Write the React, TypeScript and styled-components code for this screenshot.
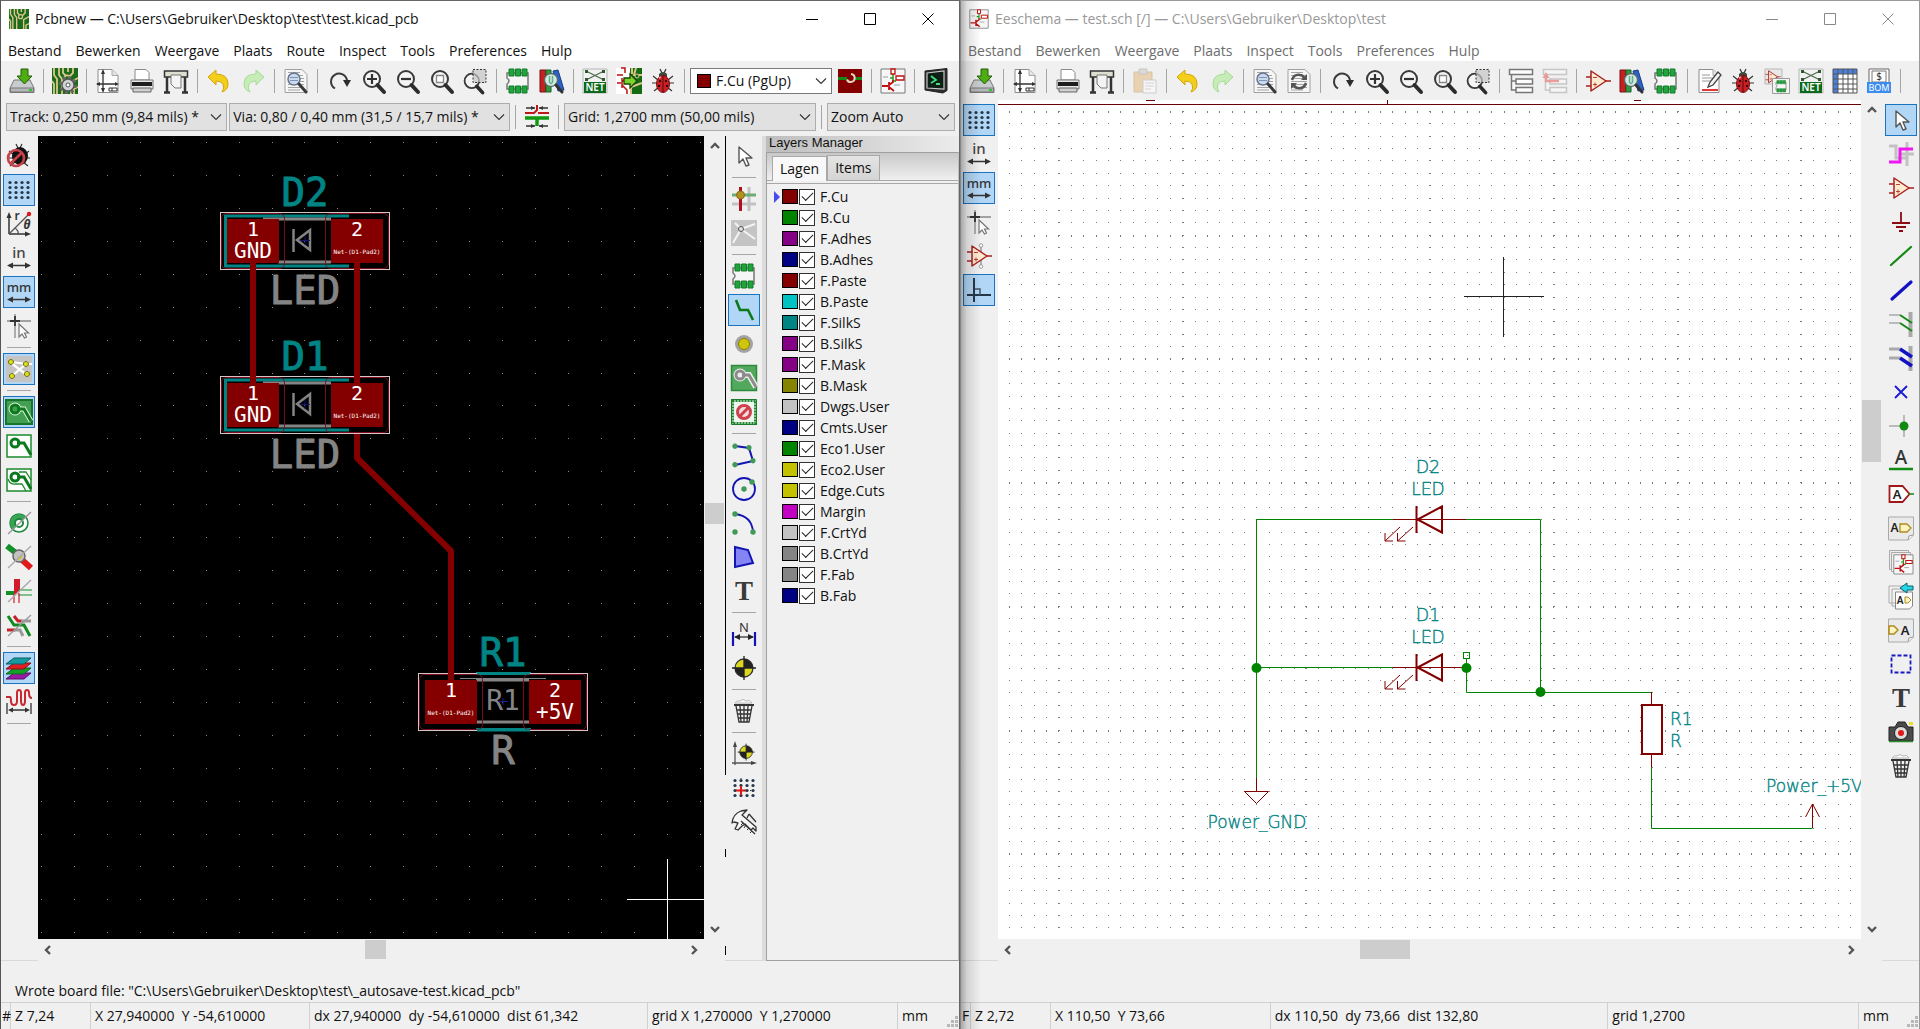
import React from "react";
import styled, { createGlobalStyle, css } from "styled-components";

/* ---------- theme values ---------- */

const UI_FONT = `"Open Sans", "Noto Sans", sans-serif`;
const CHROME = "#f0f0f0";
const BOARD_RED = "#840000";
const SILK = "#008484";
const FAB = "#848484";
const WIRE = "#008400";

const GlobalStyle = createGlobalStyle`
  * { box-sizing: border-box; }
  html, body { margin: 0; padding: 0; background: ${CHROME}; }
  body { font-family: ${UI_FONT}; font-size: 14px; line-height: 20px; color: #111; overflow: hidden; }
  button, select, input { font: inherit; color: inherit; margin: 0; }
`;

/* ---------- window frame ---------- */

const Desktop = styled.main`
  display: grid;
  grid-template-columns: 1fr 1fr;
  height: 100vh;
`;

const Window = styled.section<{ $inactive?: boolean }>`
  position: relative;
  display: flex;
  flex-direction: column;
  min-width: 0;
  min-height: 0;
  background: ${CHROME};
  border-top: 1px solid ${(p) => (p.$inactive ? "#999" : "#666")};
  border-left: 1px solid ${(p) => (p.$inactive ? "#858585" : "#555")};
  border-right: 1px solid ${(p) => (p.$inactive ? "#999" : "#666")};
  ${(p) =>
    p.$inactive &&
    css`
      &::before {
        content: "";
        position: absolute;
        z-index: 2;
        inset: 0 auto 0 0;
        width: 20px;
        pointer-events: none;
        background: linear-gradient(90deg, rgba(0, 0, 0, 0.3), rgba(0, 0, 0, 0.12) 30%, rgba(0, 0, 0, 0));
      }
    `}
`;

const TitleBar = styled.header<{ $inactive?: boolean }>`
  display: flex;
  align-items: center;
  height: 36px;
  padding: 0 2px 0 8px;
  gap: 6px;
  background: #fff;
  color: ${(p) => (p.$inactive ? "#999" : "#111")};
`;

const Title = styled.h1`
  flex: 1;
  margin: 0;
  font-size: 14px;
  font-weight: 400;
  line-height: 20px;
  white-space: nowrap;
`;

const Caption = styled.button`
  display: grid;
  place-items: center;
  width: 58px;
  height: 36px;
  padding: 0;
  border: 0;
  background: none;
`;

const CaptionGroup = styled.div`
  display: flex;
  margin-left: -6px;
`;

const MenuBar = styled.nav<{ $inactive?: boolean }>`
  display: flex;
  align-items: flex-end;
  height: 24px;
  background: #fff;
  color: ${(p) => (p.$inactive ? "#6d6d6d" : "#111")};
`;

const MenuItem = styled.button`
  padding: 0 7px;
  height: 21px;
  line-height: 20px;
  border: 0;
  background: none;
`;

const ToolRow = styled.div<{ $height: number }>`
  display: flex;
  align-items: center;
  gap: 2px;
  height: ${(p) => p.$height}px;
  padding: 0 5px;
`;

const SelectRow = styled(ToolRow)`
  padding-right: 4px;
`;

const Workspace = styled.div<{ $gap?: number }>`
  display: flex;
  flex: 1;
  min-height: 0;
  margin-top: ${(p) => p.$gap ?? 0}px;
`;

const SideBar = styled.div<{ $side: "left" | "right" | "inner" }>`
  display: flex;
  flex-direction: column;
  align-items: center;
  gap: 2px;
  flex: none;
  width: 37px;
  padding: 4px ${(p) => (p.$side === "left" ? 3 : 2)}px 0 ${(p) => (p.$side === "left" ? 2 : 3)}px;
  border-bottom: 1px solid #d9d9d9;
  ${(p) =>
    p.$side === "inner" &&
    css`
      background: linear-gradient(
          #000 0 639px,
          transparent 639px 713px,
          #000 713px 721px,
          transparent 721px 810px,
          #000 810px 819px,
          transparent 819px
        )
        0 0 / 1px 100% no-repeat;
    `}
`;

const ToolBtn = styled.button<{ $on?: boolean; $off?: boolean }>`
  display: grid;
  place-items: center;
  flex: none;
  width: 32px;
  height: 32px;
  padding: 0;
  border: 1px solid ${(p) => (p.$on ? "#1a74c0" : "transparent")};
  background: ${(p) => (p.$on ? "#b2d6f5" : "transparent")};
  opacity: ${(p) => (p.$off ? 0.4 : 1)};
`;

const IconSvg = styled.svg`
  display: block;
  flex: none;
  overflow: visible;
`;

const VSep = styled.span`
  width: 1px;
  height: 24px;
  margin: 0 3px;
  background: #a6a6a6;
`;

const HSep = styled.span`
  width: 24px;
  height: 1px;
  margin: 3px 0;
  background: #a6a6a6;
`;

/* ---------- drop-downs ---------- */

const SelectWrap = styled.div<{ $grow: number; $white?: boolean }>`
  display: grid;
  grid-template-columns: auto 1fr auto;
  align-items: center;
  flex: ${(p) => (p.$white ? "0 0 142px" : `${p.$grow} 1 0`)};
  min-width: 0;
  height: ${(p) => (p.$white ? 26 : 28)}px;
  border: 1px solid ${(p) => (p.$white ? "#7a7a7a" : "#adadad")};
  background: ${(p) => (p.$white ? "#fff" : "#e1e1e1")};
  & > select {
    grid-area: 1 / 1 / 2 / 4;
    width: 100%;
    height: 100%;
    padding: 0 20px 0 ${(p) => (p.$white ? 25 : 3)}px;
    border: 0;
    background: transparent;
    appearance: none;
  }
  & > svg {
    grid-area: 1 / 3;
    margin-right: 4px;
    pointer-events: none;
  }
`;

const SelectChip = styled.span`
  grid-area: 1 / 1;
  width: 14px;
  height: 14px;
  margin-left: 6px;
  border: 1px solid #000;
  background: ${BOARD_RED};
`;

/* ---------- canvas and scroll bars ---------- */

const CanvasArea = styled.div`
  display: grid;
  flex: 1;
  min-width: 0;
  grid-template-columns: minmax(0, 1fr) 21px;
  grid-template-rows: minmax(0, 1fr) 22px;
`;

const Drawing = styled.svg<{ $bg: string }>`
  display: block;
  width: 100%;
  height: 100%;
  overflow: hidden;
  background: ${(p) => p.$bg};
`;

const ScrollBar = styled.div<{ $dir: "v" | "h"; $tracks: string }>`
  display: grid;
  padding: ${(p) => (p.$dir === "v" ? "0 1px" : "1px 0 2px")};
  ${(p) => (p.$dir === "v" ? `grid-template-rows: ${p.$tracks};` : `grid-template-columns: ${p.$tracks};`)}
`;

const ScrollArrow = styled.button`
  display: grid;
  place-items: center;
  padding: 0;
  border: 0;
  background: none;
`;

const Thumb = styled.span`
  background: #cdcdcd;
`;

/* ---------- layers panel ---------- */

const Layers = styled.aside`
  display: flex;
  flex-direction: column;
  flex: none;
  width: 197px;
  border-left: 4px solid #dcdcdc;
`;

const LayersCaption = styled.div`
  height: 16px;
  padding-left: 3px;
  font-family: "Liberation Sans", Arial, sans-serif;
  font-size: 13px;
  line-height: 14px;
  background: linear-gradient(90deg, #bdbdbd, #ececec);
`;

const LayersBody = styled.div`
  display: flex;
  flex-direction: column;
  flex: 1;
  border: 1px solid #a0a0a0;
  border-right-color: #c0c0c0;
`;

const TabStrip = styled.div`
  display: flex;
  align-items: flex-end;
  height: 28px;
  padding-left: 5px;
  background: linear-gradient(#c8c8c8, ${CHROME});
  border-bottom: 1px solid #a8a8a8;
`;

const Tab = styled.button<{ $on?: boolean }>`
  height: 25px;
  padding: 0 7px;
  margin-bottom: ${(p) => (p.$on ? -1 : 0)}px;
  border: 1px solid #a8a8a8;
  border-bottom: 0;
  background: ${(p) => (p.$on ? "#f8f8f8" : "linear-gradient(#e4e4e4, #d4d4d4)")};
`;

const LayerList = styled.ul`
  margin: 2px 0 0;
  padding: 2px 0 0;
  border-top: 1px solid #a8a8a8;
  list-style: none;
`;

const LayerRow = styled.li`
  display: grid;
  grid-template-columns: 8px 16px 1fr;
  align-items: center;
  height: 21px;
  padding-left: 7px;
`;

const ActiveMark = styled.span<{ $on: boolean }>`
  width: 0;
  height: 0;
  border-left: 6px solid ${(p) => (p.$on ? "#4a4af0" : "transparent")};
  border-top: 6px solid transparent;
  border-bottom: 6px solid transparent;
`;

const Swatch = styled.button<{ $color: string }>`
  width: 16px;
  height: 15px;
  padding: 0;
  border: 1px solid #000;
  background: ${(p) => p.$color};
`;

const LayerLabel = styled.label`
  display: flex;
  align-items: center;
  gap: 5px;
  margin-left: 1px;
`;

const Check = styled.input`
  display: grid;
  place-items: center;
  width: 16px;
  height: 16px;
  border: 1px solid #333;
  background: #fff;
  appearance: none;
  &:checked::after {
    content: "";
    width: 10px;
    height: 5px;
    margin-bottom: 3px;
    border-left: 1px solid #222;
    border-bottom: 1px solid #222;
    transform: rotate(-45deg);
  }
`;

/* ---------- message and status bars ---------- */

const Message = styled.div`
  display: flex;
  align-items: center;
  flex: none;
  height: 41px;
  padding: 19px 14px 0;
`;

const Status = styled.footer<{ $columns: string }>`
  display: grid;
  grid-template-columns: ${(p) => p.$columns};
  flex: none;
  height: 27px;
  border-top: 1px solid #d0d0d0;
`;

const Cell = styled.div`
  display: flex;
  align-items: center;
  overflow: hidden;
  padding-left: 4px;
  border-right: 1px solid #d0d0d0;
  white-space: pre;
  &:first-child {
    overflow: visible;
    padding-left: 1px;
  }
  &:last-child {
    justify-content: space-between;
    border-right: 0;
  }
`;

/* ---------- icons ---------- */

const sans = `"Noto Sans", sans-serif`;

const lens = (
  <>
    <circle cx="12" cy="11" r="8" fill="#f4f4f4" stroke="#3a3a3a" strokeWidth="2" />
    <path d="M17.500 17l6.500 7" stroke="#2c2c2c" strokeWidth="4" strokeLinecap="round" />
  </>
);

const sheetBase = (
  <>
    <path d="M3 1.500h14l6 6v17H3z" fill="#fdfdfd" stroke="#8c8c8c" />
    <path d="M17 1.500v6h6" fill="#e4e4e4" stroke="#a8a8a8" />
  </>
);

const textSheet = (
  <>
    <path d="M2 1.500h17l5 5v18H2z" fill="#f6f6f6" stroke="#a0a0a0" />
    <path d="M5 4.500h12M5 7.500h15M5 10.500h16M5 13.500h16M5 16.500h16M5 19.500h16M5 22h12" stroke="#a4a4a4" />
  </>
);

const chip = (
  <>
    <path d="M2 5h21v16H2v-5q4-3 0-6z" fill="#f6f6f6" stroke="#777" strokeWidth="1.500" />
    <path
      d="M4 1h5v7H4zM10.500 1h5v7h-5zM17 1h5v7h-5zM4 18h5v7H4zM10.500 18h5v7h-5zM17 18h5v7h-5z"
      fill="#1fa53c"
      stroke="#157a2b"
    />
  </>
);

const opamp = (
  <>
    <path d="M1 9h5M1 18h5M20 13h6" stroke="#a82020" strokeWidth="1.300" />
    <path d="M6 3v20l15-10z" fill="#fdebd0" stroke="#a82020" strokeWidth="1.500" strokeLinejoin="round" />
    <path d="M8 9.500h4M8 16.500h4M10 14.500v4" stroke="#b84040" />
  </>
);

const schematic = (
  <>
    <path d="M1 1h24v24H1z" fill="#f7f7f7" stroke="#777" />
    <path d="M13 3v10h3M13 10h-3" stroke="#1c9a1c" strokeWidth="1.500" fill="none" />
    <path d="M11 1h4v5h-4zM16 8h8v4h-8z" fill="#fff" stroke="#c01010" strokeWidth="1.300" />
    <path d="M2 18h6M9 14v8M9 17l4-3v-2M9 19l5 4" stroke="#c01010" strokeWidth="1.800" fill="none" />
    <path d="M3 9h5M14 17h6" stroke="#99a" />
  </>
);

const board = (
  <>
    <path d="M0 0h26v26H0z" fill="#1d6b1d" />
    <path
      d="M2 0v7l3 4v15M7 0v7l3 4v15M11 0v5l3 3M16 0v4M21 0v5l-4 4M26 10l-7 4v12M0 13l2 3v10M26 19l-4 2v5"
      fill="none"
      stroke="#dcc88c"
      strokeWidth="1.800"
    />
    <circle cx="15" cy="10" r="2.600" fill="#1d6b1d" stroke="#dcc88c" strokeWidth="1.600" />
  </>
);

const bugLegs = <path d="M3 8l5 4M2 15h6M4 23l5-4M23 8l-5 4M24 15h-6M22 23l-5-4M10 1l2 4M16 1l-2 4" stroke="#333" strokeWidth="1.200" />;

const bug = (
  <>
    {bugLegs}
    <path d="M9 6q4-4 8 0v3H9z" fill="#3b4a3b" />
    <ellipse cx="13" cy="16" rx="6.500" ry="8.500" fill="#c81e24" stroke="#7a1014" />
    <path d="M13 8v16" stroke="#5a0a0e" />
    <path d="M9 12h2v2H9zM15 12h2v2h-2zM8 17h2v2H8zM16 17h2v2h-2z" fill="#300" />
    <path d="M9 10l2-1" stroke="#f4a0a0" strokeWidth="1.500" />
  </>
);

const net = (
  <>
    <path d="M1 1h24v24H1z" fill="#f2f2f2" stroke="#b5b5b5" />
    <path d="M4 3l18 9M4 12l18-9" stroke="#4b6b4b" strokeWidth="1.300" />
    <path d="M3 2h3v3H3zM20 2h3v3h-3zM3 10h3v3H3zM20 10h3v3h-3z" fill="#2c5a2c" />
    <path d="M2 14h22v11H2z" fill="#0c6a1c" />
    <text x="13" y="23" textAnchor="middle" fontFamily={sans} fontSize="10" fontWeight="600" fill="#fff">
      NET
    </text>
  </>
);

const trash = (
  <>
    <path d="M4 5q2-3 5-2 3-3 6 0 4-2 6 2z" fill="#fff" stroke="#b4b4b4" />
    <path d="M3 7h20" stroke="#333" strokeWidth="2" />
    <path d="M5 8l3 16h10l3-16M9 8l1 16M13 8v16M17 8l-1 16M6 12h14M7 16h12M7 20h12" fill="none" stroke="#333" strokeWidth="1.300" />
  </>
);

const target = (
  <>
    <circle cx="13" cy="13" r="9" fill="#dcd820" stroke="#333" strokeWidth="1.300" />
    <path d="M13 13V4a9 9 0 0 1 9 9zM13 13v9a9 9 0 0 1-9-9z" fill="#222" />
    <path d="M13 1v24M1 13h24" stroke="#222" strokeWidth="1.300" />
  </>
);

const dots = [5, 10, 15, 20].map((y) =>
  [4, 10, 16, 22].map((x) => <circle key={`${x}-${y}`} cx={x} cy={y + 0.5} r="1.600" fill="#24384a" />),
);

const doubleArrow = (
  <>
    <path d="M3 20.500h20" stroke="#333" strokeWidth="1.500" />
    <path d="M1 20.500l6-3v6zM25 20.500l-6-3v6z" fill="#333" />
  </>
);

const pointer = <path d="M8 4v16l4-4 3 7 3-1-3-7h6z" fill="#fff" stroke="#555" strokeWidth="1.400" strokeLinejoin="round" />;

const zoneTrack = (color: string) => (
  <>
    <path d="M11 10h7l7 12" fill="none" stroke={color} strokeWidth="3" />
    <circle cx="9" cy="10" r="4" fill="none" stroke={color} strokeWidth="3" />
  </>
);

const bigT = (
  <text x="13" y="22" textAnchor="middle" fontFamily={`"Liberation Serif", serif`} fontSize="27" fontWeight="700" fill="#3a3a3a">
    T
  </text>
);

const icons = {
  save: (
    <>
      <path d="M5 12h16l4 8v4.500H1V20z" fill="#c9cccf" stroke="#777" />
      <path d="M1.500 20h23v4h-23z" fill="#b4b8bb" stroke="#777" />
      <path d="M20 22h3" stroke="#2bc42b" strokeWidth="2" />
      <path d="M12 1h7v7h4l-7.500 8L8 8h4z" fill="#4cae12" stroke="#245c06" />
    </>
  ),
  boardSetup: (
    <>
      {board}
      <circle cx="16" cy="17" r="7.500" fill="none" stroke="#666" strokeWidth="3" strokeDasharray="3 2.900" />
      <circle cx="16" cy="17" r="6" fill="#cfd3d6" stroke="#555" strokeWidth="1.300" />
      <circle cx="16" cy="17" r="2" fill="#fff" stroke="#555" />
    </>
  ),
  board,
  page: (
    <>
      {sheetBase}
      <path d="M2 16h19M8 3v20" stroke="#333" strokeWidth="1.300" />
      <path d="M8 1l-2 5h4zM8 25l-2-5h4zM1 16l4-2v4zM24 16l-4-2v4z" fill="#333" />
      <path d="M14 20h8v3h-8zM17 20v3" fill="#fff" stroke="#333" />
    </>
  ),
  print: (
    <>
      <path d="M6 1.500h11l3 3V12H6z" fill="#fff" stroke="#8a8a8a" />
      <path d="M2 12h22v9H2z" fill="#e6e6e6" stroke="#777" />
      <path d="M3 14h20v4H3z" fill="#1d1d1d" />
      <path d="M4 20h18v4H4z" fill="#cfcfcf" stroke="#666" />
    </>
  ),
  plot: (
    <>
      <path d="M1.500 3h23v6h-23z" fill="#dcdfd0" stroke="#333" strokeWidth="1.500" />
      <path d="M4 9v15M22 9v15M1 24.500h6M19 24.500h6" stroke="#333" strokeWidth="2.500" />
      <path d="M8 7h10v13h-6l-4-4z" fill="#f4f4f4" stroke="#777" />
    </>
  ),
  undo: <path d="M2 9l8-7v4q12 0 12 10 0 6-6 8 3-4 1-8-2-3-7-3v4z" fill="#f3cf1a" stroke="#d2a510" />,
  redo: <path d="M24 9l-8-7v4Q4 6 4 16q0 6 6 8-3-4-1-8 2-3 7-3v4z" fill="#c6edb8" stroke="#a6dc96" />,
  find: (
    <>
      {textSheet}
      <circle cx="11" cy="11" r="6" fill="#cddaee" stroke="#66758f" strokeWidth="1.500" />
      <path d="M7 9.500h8M7 12.500h8" stroke="#7d92b8" />
      <path d="M16 16l7 8" stroke="#3a3a3a" strokeWidth="3" strokeLinecap="round" />
    </>
  ),
  replace: (
    <>
      {textSheet}
      <path d="M6 12q2-6 8-5 3 0 4 3M20 15q-2 6-8 5-3 0-4-3" fill="none" stroke="#555" strokeWidth="2.500" />
      <path d="M21 6v6h-6zM5 21v-6h6z" fill="#555" />
    </>
  ),
  refresh: (
    <>
      <path d="M9 20.500A8 8 0 1 1 21 13" fill="none" stroke="#3a3a3a" strokeWidth="2" />
      <path d="M17 12h8l-4 7z" fill="#2c2c2c" />
    </>
  ),
  zoomIn: (
    <>
      {lens}
      <path d="M7 11h10M12 6v10" stroke="#333" strokeWidth="2.200" />
    </>
  ),
  zoomOut: (
    <>
      {lens}
      <path d="M7 11h10" stroke="#333" strokeWidth="2.200" />
    </>
  ),
  zoomFit: (
    <>
      {lens}
      <path d="M8.500 7.500h7v7h-7z" fill="#fff" stroke="#888" strokeWidth="1.300" />
    </>
  ),
  zoomArea: (
    <>
      <g transform="translate(-1 3) scale(.9)">{lens}</g>
      <path d="M11 1.500h13v13H11z" fill="#c4c4c4" fillOpacity=".7" stroke="#333" strokeDasharray="2 1.500" />
    </>
  ),
  footprint: chip,
  library: (
    <>
      <path d="M1 2h6v22H1z" fill="#c62020" stroke="#7c0e0e" />
      <path d="M7 2h5v22H7z" fill="#2d9a3c" stroke="#17632a" />
      <path d="M14 3l5-1 6 20-6 1z" fill="#2d62c4" stroke="#153c86" />
      <circle cx="12" cy="12" r="6.500" fill="#d4e8e2" stroke="#5a6a6a" strokeWidth="1.300" />
      <path d="M10.500 8v6q1.500 3 3 0V8" fill="none" stroke="#5cb088" strokeWidth="1.500" />
      <path d="M17 17l6 7" stroke="#333" strokeWidth="3" strokeLinecap="round" />
    </>
  ),
  net,
  update: (
    <>
      <path d="M0 0h26v26H0z" fill="#fff" />
      <path d="M14 0h12v26H14z" fill="#146b14" />
      <path d="M16 0v6M20 0l-2 7h8M15 26v-7l11-4" fill="none" stroke="#d8c48a" strokeWidth="2" />
      <circle cx="21" cy="8" r="2" fill="#146b14" stroke="#d8c48a" />
      <path d="M5 0h4v5M1 15h4M6 10v10M6 14l4-4M6 17l5 5v4M1 7h6" fill="none" stroke="#c01010" strokeWidth="1.500" />
      <path d="M8 10h6V6l7 7-7 7v-4H8z" fill="#7ad42c" stroke="#1c4406" strokeWidth="1.300" />
    </>
  ),
  bug,
  drcOff: (
    <>
      {bugLegs}
      <ellipse cx="14" cy="13" rx="8" ry="9" fill="#111" />
      <circle cx="10" cy="15" r="8" fill="none" stroke="#c8424a" strokeWidth="2.600" />
      <path d="M4.500 20.500L16 9.500" stroke="#c8424a" strokeWidth="2.600" />
    </>
  ),
  layerPair: (
    <>
      <path d="M1 1h24v24H1z" fill={BOARD_RED} />
      <path d="M1 10.500h9M17 10.500h8" stroke="#168a16" strokeWidth="3" />
      <path d="M14 6a4 4 0 1 1-4 5.500" fill="none" stroke="#e6d3c0" strokeWidth="2" />
    </>
  ),
  schematic,
  python: (
    <>
      <path d="M2 3l22-2.500v22L20 25 2 22z" fill="#2c2c2c" stroke="#222" />
      <path d="M4 5l17-2v18L4 20z" fill="#0d1f16" stroke="#c8c8c8" strokeWidth="1.200" />
      <path d="M8 8l5 4-5 3M13 16h4" fill="none" stroke="#3fe07a" strokeWidth="1.800" />
    </>
  ),
  trackWidth: (
    <>
      <path d="M2 4h9M15 4h9M2 22h9M15 22h9" stroke="#333" strokeWidth="1.300" />
      <path d="M11 4l-4-2v4zM15 4l4-2v4zM11 22l-4-2v4zM15 22l4-2v4z" fill="#333" />
      <path d="M13 1v5l-3 3H1M14 9h11" fill="none" stroke="#c01818" strokeWidth="2" />
      <path d="M1 14h24M13 15v7" fill="none" stroke="#119a11" strokeWidth="3.500" />
    </>
  ),
  grid: <>{dots}</>,
  polar: (
    <>
      <path d="M3 23V5M3 23h17" stroke="#333" strokeWidth="1.500" />
      <path d="M3 1l-2.500 6h5zM25 23l-6-2.500v5z" fill="#333" />
      <path d="M3 23L22 4M9 17q4 3 3 6" fill="none" stroke="#555" strokeWidth="1.300" />
      <circle cx="23" cy="3" r="2.200" fill="#e01818" />
      <text x="11" y="9" textAnchor="middle" fontFamily={sans} fontSize="12" fontWeight="600" fill="#333">
        r
      </text>
      <text x="21" y="18" textAnchor="middle" fontFamily={sans} fontSize="12" fontStyle="italic" fontWeight="700" fill="#333">
        θ
      </text>
    </>
  ),
  inch: (
    <>
      <text x="13" y="13" textAnchor="middle" fontFamily={sans} fontSize="15" fontWeight="500" fill="#444">
        in
      </text>
      {doubleArrow}
    </>
  ),
  mm: (
    <>
      <text x="13" y="13" textAnchor="middle" fontFamily={sans} fontSize="13" fontWeight="500" fill="#333">
        mm
      </text>
      {doubleArrow}
    </>
  ),
  cursorShape: (
    <>
      <path d="M1 8h24M9 1v24" stroke="#888" strokeWidth="1.300" />
      <path d="M4 8h10M9 3v10" stroke="#333" strokeWidth="1.800" />
      <path d="M13 11v13l3-3 2.500 4 2-1-2-4h4z" fill="#fff" stroke="#777" strokeWidth="1.200" />
    </>
  ),
  ratsnest: (
    <>
      <path d="M0 0h26v26H0z" fill="#c4c4c4" />
      <path d="M5 7l16 12M20 8L6 20M5 6l16 2M20 8h6" stroke="#fff" strokeWidth="2.200" />
      <path d="M5 3.500a2.500 2.500 0 1 1-.1 0zM20 5.500a2.500 2.500 0 1 1-.1 0zM6 17.500a2.500 2.500 0 1 1-.1 0zM21 15.500a2.500 2.500 0 1 1-.1 0z" fill="#dfe01c" stroke="#6a6a10" />
    </>
  ),
  zoneFill: (
    <>
      <path d="M0 1h26v24H0z" fill="#43a053" />
      <path d="M0 1h26v24H0z" fill="none" stroke="#18742a" strokeWidth="2" />
      <path d="M11 10h7l7 12" fill="none" stroke="#dff2df" strokeWidth="5" />
      <circle cx="9" cy="10" r="6.500" fill="#dff2df" />
      <circle cx="9" cy="10" r="4" fill="#43a053" />
      {zoneTrack("#0c7a1c")}
    </>
  ),
  zoneOff: (
    <>
      <path d="M1 2h24v22H1z" fill="#fff" stroke="#1c8a2c" strokeWidth="1.500" />
      {zoneTrack("#0c7a1c")}
    </>
  ),
  zoneOutline: (
    <>
      <path d="M1 2h24v22H1z" fill="#fff" stroke="#1c8a2c" strokeWidth="1.500" />
      {zoneTrack("#0c7a1c")}
      <path d="M2 12q2 6 8 5h6l4 7M13 5h7l5 8" fill="none" stroke="#1c8a2c" strokeWidth="1.300" />
    </>
  ),
  padSketch: (
    <>
      <circle cx="13" cy="13" r="9" fill="#fff" stroke="#1c8a3c" strokeWidth="1.500" />
      <path d="M7 20a9 9 0 0 1 13-13z" fill="#3aa455" />
      <circle cx="13" cy="13" r="4" fill="#fff" stroke="#1c8a3c" strokeWidth="2" />
      <path d="M2 24L25 2" stroke="#999" strokeWidth="1.300" />
    </>
  ),
  viaSketch: (
    <>
      <path d="M1 2l9 7" stroke="#12902a" strokeWidth="6" />
      <path d="M15 15l10 9" stroke="#e01a1a" strokeWidth="6" />
      <circle cx="13" cy="12" r="6" fill="#c2c2c2" stroke="#666" strokeWidth="1.500" />
      <path d="M13 12h4l-5 5z" fill="#d8c414" />
      <path d="M2 24L25 2" stroke="#aaa" strokeWidth="1.300" />
    </>
  ),
  trackSketch: (
    <>
      <path d="M0 13h8v4H0z" fill="#12902a" />
      <path d="M8 1h6v12l-6 4z" fill="#d21a2a" />
      <path d="M12 12h14M12 17h14" stroke="#12902a" strokeWidth="1.200" />
      <path d="M8 16v9M13 15v10" stroke="#d21a2a" strokeWidth="1.200" />
      <path d="M2 24L25 2" stroke="#aaa" strokeWidth="1.500" />
    </>
  ),
  contrast: (
    <>
      <path d="M2 4l6 9h10l6 11" fill="none" stroke="#128a22" strokeWidth="3" />
      <path d="M8 4l4 5h4M1 18h8" fill="none" stroke="#c82028" strokeWidth="3" />
      <path d="M15 9h10M8 18h6l3 6" fill="none" stroke="#999" strokeWidth="3" />
      <path d="M2 24L25 3" stroke="#999" strokeWidth="1.300" />
    </>
  ),
  layers: (
    <>
      <path d="M0 24L8 18h17l-7 6z" fill="#9a1aa8" stroke="#5c0c66" />
      <path d="M0 19l8-6h17l-7 6z" fill="#12a02a" stroke="#0a661a" />
      <path d="M0 14l8-6h17l-7 6z" fill="#e01e24" stroke="#8a0c10" />
      <path d="M0 9l8-6h17l-7 6z" fill="#149aa0" stroke="#0a5c60" />
    </>
  ),
  meander: (
    <>
      <path d="M0 8h4q1 0 1 4t3 4 3-4V4q0-3 2-3t2 3v8q0 4 2 4t2-4V4q0-3 2-3t2 3q0 5 3 5" fill="none" stroke="#c82830" strokeWidth="2" />
      <path d="M1 14v11M25 14v11M4 21h18" stroke="#333" strokeWidth="1.300" />
      <path d="M2 21l5-2.500v5zM24 21l-5-2.500v5z" fill="#333" />
    </>
  ),
  pointer,
  highlightNet: (
    <>
      <path d="M18 1v24M1 18h24" stroke="#c2c2c2" strokeWidth="3" />
      <path d="M1 9h24" stroke="#6cae78" strokeWidth="3" />
      <path d="M9.500 1v24" stroke="#b01020" strokeWidth="3" />
      <circle cx="9.500" cy="9" r="4" fill="#b09020" stroke="#8a6c14" />
    </>
  ),
  localRats: (
    <>
      <path d="M0 0h26v26H0z" fill="#c4c4c4" />
      <path d="M10 9L2 23M10 9l14 10M10 9l14-5M10 9L4 3" stroke="#f4f4f4" strokeWidth="2" />
      <circle cx="10" cy="9" r="2.500" fill="#ddd" stroke="#555" />
    </>
  ),
  route: <path d="M5 3l4 10h8l5 10" fill="none" stroke="#0c7a1c" strokeWidth="2.600" />,
  via: (
    <>
      <circle cx="13" cy="13" r="9" fill="#a2a2a2" />
      <circle cx="13" cy="13" r="5.500" fill="#cfc60c" stroke="#8a8408" />
    </>
  ),
  zone: (
    <>
      <path d="M0 0h26v26H0z" fill="#52a85c" />
      <path d="M.5.5h25v25H.5z" fill="none" stroke="#2d8a3c" strokeWidth="1.500" />
      <path d="M11 10h7l7 12" fill="none" stroke="#eee" strokeWidth="6" />
      <circle cx="9" cy="10" r="6.500" fill="#eee" />
      {zoneTrack("#8c8c8c")}
    </>
  ),
  keepout: (
    <>
      <path d="M1.500 1.500h23v23h-23z" fill="#eef6ee" stroke="#1c8a2c" strokeWidth="3" strokeDasharray="2 1" />
      <path d="M.5.5h25v25H.5z" fill="none" stroke="#1c7a2c" />
      <circle cx="13" cy="13" r="6.500" fill="#f0dcdc" stroke="#d0404c" strokeWidth="3" />
      <path d="M8.500 17.500l9-9" stroke="#d0404c" strokeWidth="3" />
    </>
  ),
  polyline: (
    <>
      <path d="M4 4l14 2 4 13-18 4" fill="none" stroke="#1414b4" strokeWidth="2" />
      <path d="M4 1.500a2.700 2.700 0 1 1-.1 0zM18 3a2.700 2.700 0 1 1-.1 0zM22 16a2.700 2.700 0 1 1-.1 0zM4 20a2.700 2.700 0 1 1-.1 0z" fill="#3f9a58" />
    </>
  ),
  circle: (
    <>
      <circle cx="13" cy="13" r="11" fill="none" stroke="#1414b4" strokeWidth="1.800" />
      <circle cx="13" cy="13" r="2.700" fill="#3f9a58" />
      <circle cx="21" cy="6" r="2.700" fill="#3f9a58" />
    </>
  ),
  arc: (
    <>
      <path d="M4 4q17 2 18 18" fill="none" stroke="#1414b4" strokeWidth="1.800" />
      <circle cx="4" cy="4" r="2.700" fill="#3f9a58" />
      <circle cx="22" cy="22" r="2.700" fill="#3f9a58" />
      <circle cx="4" cy="22" r="2.700" fill="#3f9a58" />
    </>
  ),
  polygon: <path d="M4 3l13 3 5 13-18 4z" fill="#8484f4" stroke="#1414b4" strokeWidth="2" />,
  text: bigT,
  dimension: (
    <>
      <path d="M2 11v14M24 11v14" stroke="#1414b4" strokeWidth="2.200" />
      <path d="M4 16h18" stroke="#333" strokeWidth="1.300" />
      <path d="M3 16l6-3v6zM23 16l-6-3v6z" fill="#222" />
      <text x="13" y="11" textAnchor="middle" fontFamily={sans} fontSize="13" fill="#333">
        N
      </text>
    </>
  ),
  target,
  trash,
  origin: (
    <>
      <path d="M4 24V5M1 22h20" stroke="#555" strokeWidth="1.300" />
      <path d="M4 0L2 6h4zM26 22l-6-2v4z" fill="#444" />
      <g transform="translate(6 2) scale(.7)">{target}</g>
    </>
  ),
  gridOrigin: (
    <>
      {dots}
      <path d="M5 15.500h10M10 11v9" stroke="#e01818" strokeWidth="2" />
      <path d="M13 15.500h10M10 3v7" stroke="#333" strokeDasharray="1 2" />
    </>
  ),
  measure: (
    <>
      <path
        d="M1 14q1-9 9-12l6-1-5 5 14 12v4l-3-3-2 2-6-6-3 2-4 4-3-1 3-6-4-1zM18 5l7 8M18 5l-2 4M10 12l14 13"
        fill="#f6f6f6"
        stroke="#333"
        strokeWidth="1.300"
        strokeLinejoin="round"
      />
      <path d="M12 14l-2 2M15 16l-2 3M18 19l-2 2M21 22l-2 2" stroke="#333" />
    </>
  ),
  paste: (
    <>
      <path d="M2 4h18v20H2z" fill="#e0a656" stroke="#b98238" />
      <path d="M7 1h8v5H7z" fill="#bbb" stroke="#888" />
      <path d="M11 12h13v13H11z" fill="#fff" stroke="#999" />
      <path d="M13 15h9M13 18h9M13 21h6" stroke="#aaa" />
    </>
  ),
  hierNav: (
    <path d="M1.500 1.500h23v5h-23zM8 11h16.500v5H8zM8 19.500h16.500v5H8zM3.500 7v15H8M3.500 13H8" fill="#fdfdfd" stroke="#777" strokeWidth="1.500" />
  ),
  hierUp: (
    <>
      <path d="M1.500 1.500h23v5h-23zM8 11h16.500v5H8zM8 19.500h16.500v5H8zM3.500 7v15H8" fill="#fdfdfd" stroke="#888" strokeWidth="1.500" />
      <path d="M17 13H4V8" fill="none" stroke="#d22" strokeWidth="2.500" />
      <path d="M4 4l-3.500 6h7z" fill="#d22" />
    </>
  ),
  opamp,
  annotate: (
    <>
      {sheetBase}
      <path d="M6 7h8M6 10h11M6 13h8" stroke="#999" />
      <path d="M6 22h16" stroke="#d22" strokeWidth="1.800" />
      <path d="M12 19l2-5L22 4l3 3-8 10z" fill="#f4f4f4" stroke="#444" strokeWidth="1.300" />
    </>
  ),
  assign: (
    <>
      <path d="M1 1h17v15H1z" fill="#e8e8e8" stroke="#b8b8b8" />
      <g transform="translate(1 1) scale(.6)">{opamp}</g>
      <path d="M8.500 10.500h17v15h-17z" fill="#f4f4f4" stroke="#9a9a9a" />
      <g transform="translate(11 12) scale(.48)">{chip}</g>
    </>
  ),
  table: (
    <>
      <path d="M1 1h24v24H1z" fill="#fff" />
      <path d="M1 1h24v5H1zM1 1h5v24H1z" fill="#4a80dc" />
      <path d="M1 1h24v24H1zM6 1v24M11 1v24M16 1v24M21 1v24M1 6h24M1 11h24M1 16h24M1 21h24" fill="none" stroke="#555" />
    </>
  ),
  bom: (
    <>
      <path d="M3 1h20v14H3z" fill="#fff" stroke="#666" />
      <path d="M6 3h14v11H6z" fill="#fff" stroke="#777" />
      <text x="13" y="12" textAnchor="middle" fontFamily={sans} fontSize="10" fill="#333">
        $
      </text>
      <path d="M1 14h24v11H1z" fill="#3c8cf0" />
      <text x="13" y="23" textAnchor="middle" fontFamily={sans} fontSize="9" fill="#fff">
        BOM
      </text>
    </>
  ),
  hiddenPins: (
    <>
      <path d="M15 3v20" stroke="#999" strokeWidth="1.500" />
      {opamp}
      <circle cx="15" cy="2.500" r="1.800" fill="#fff" stroke="#999" />
      <circle cx="15" cy="23.500" r="1.800" fill="#fff" stroke="#999" />
    </>
  ),
  orth: (
    <>
      <path d="M8 1v24M1 18h24" stroke="#24384a" strokeWidth="2" />
      <path d="M9 12h5v6" fill="none" stroke="#456" strokeWidth="1.500" />
    </>
  ),
  netSch: (
    <>
      <path d="M1 5h7v12h12M19 1v24M13 13h13" fill="none" stroke="#c2c2c2" strokeWidth="3" />
      <path d="M1 21h11V8h13" fill="none" stroke="#f018f0" strokeWidth="3" />
    </>
  ),
  ground: <path d="M13 3v11M4 14h18M8 18h10M11 22h4" stroke="#8a0c10" strokeWidth="1.800" />,
  wire: <path d="M3 22L23 4" stroke="#138a13" strokeWidth="2.200" strokeLinecap="round" />,
  bus: <path d="M4 22L23 5" stroke="#1212c4" strokeWidth="3.200" strokeLinecap="round" />,
  wireEntry: (
    <>
      <path d="M22.500 1v25" stroke="#aaa" strokeWidth="4" />
      <path d="M1 4h11M1 12h11" stroke="#bbb" strokeWidth="2" />
      <path d="M12 4l12 8M12 12l12 8" stroke="#138a13" strokeWidth="2" />
    </>
  ),
  busEntry: (
    <>
      <path d="M22.500 1v25" stroke="#aaa" strokeWidth="4" />
      <path d="M1 4h11M1 13h11" stroke="#aaa" strokeWidth="3" />
      <path d="M12 4l12 8M12 13l12 8" stroke="#1212c4" strokeWidth="3.500" />
    </>
  ),
  noConnect: <path d="M7 7l12 12M19 7L7 19" stroke="#1818d8" strokeWidth="1.800" />,
  junction: (
    <>
      <path d="M1 13h15M16 2v22" stroke="#bbb" strokeWidth="2" />
      <circle cx="16" cy="13" r="4.500" fill="#128a12" />
    </>
  ),
  label: (
    <>
      <text x="13" y="17" textAnchor="middle" fontFamily={sans} fontSize="19" fontWeight="500" fill="#333">
        A
      </text>
      <path d="M1 22h24" stroke="#138a13" strokeWidth="2.500" />
    </>
  ),
  globalLabel: (
    <>
      <path d="M1.500 5h13l7 8-7 8h-13z" fill="#fff" stroke="#a01818" strokeWidth="1.800" />
      <path d="M21 13h5" stroke="#138a13" strokeWidth="1.500" />
      <text x="9" y="18" textAnchor="middle" fontFamily={sans} fontSize="13" fontWeight="600" fill="#222">
        A
      </text>
    </>
  ),
  hierLabel: (
    <>
      <path d="M.5 2h25v18l-5 5H.5z" fill="#eaeaea" stroke="#aaa" />
      <path d="M20 25l1-4 4-1" fill="#fff" stroke="#999" />
      <path d="M12 9h7l4 4-4 4h-7z" fill="#fbf3c0" stroke="#b08a1c" strokeWidth="1.300" />
      <text x="6.500" y="17" textAnchor="middle" fontFamily={sans} fontSize="12" fontWeight="600" fill="#222">
        A
      </text>
    </>
  ),
  sheet: (
    <>
      <path d="M1.500 1.500h19v19h-19z" fill="#eee" stroke="#aaa" />
      <path d="M3.500 3.500h19v19h-19z" fill="#eee" stroke="#aaa" />
      <g transform="translate(5 5) scale(.8)">{schematic}</g>
    </>
  ),
  importLabel: (
    <>
      <path d="M1 3h14v17H1zM4 6h14v17H4z" fill="#f2f2f2" stroke="#aaa" />
      <path d="M7.500 9h17v14l-3 3h-14z" fill="#fff" stroke="#888" />
      <path d="M25 3h-6V0l-7 5 7 5V7h6z" fill="#22d8e8" stroke="#10606a" />
      <path d="M17 14h3l3 3-3 3h-3z" fill="#fbf3c0" stroke="#b08a1c" />
      <text x="12" y="21" textAnchor="middle" fontFamily={sans} fontSize="10" fontWeight="600" fill="#222">
        A
      </text>
    </>
  ),
  sheetPin: (
    <>
      <path d="M.5 2h25v18l-5 5H.5z" fill="#eaeaea" stroke="#aaa" />
      <path d="M20 25l1-4 4-1" fill="#fff" stroke="#999" />
      <path d="M1 9h5l4 4-4 4H1z" fill="#fbf3c0" stroke="#b08a1c" strokeWidth="1.500" />
      <text x="17" y="18" textAnchor="middle" fontFamily={sans} fontSize="13" fontWeight="600" fill="#222">
        A
      </text>
    </>
  ),
  dashedBox: <path d="M3.500 4.500h19v17h-19z" fill="none" stroke="#1818c4" strokeWidth="1.800" strokeDasharray="4 2" />,
  camera: (
    <>
      <path d="M1 8h6l3-5h7l3 5h5v14H1z" fill="#4a4a4a" stroke="#222" />
      <path d="M1 22.500h24" stroke="#2a8a2a" strokeWidth="1.500" />
      <path d="M21 3h4v3h-4z" fill="#e8e020" />
      <circle cx="13" cy="14" r="6.500" fill="#ddd" stroke="#222" />
      <circle cx="13" cy="14" r="3" fill="#e01818" />
    </>
  ),
};

type IconName = keyof typeof icons;

const Glyph = ({ name, size = 26 }: { name: IconName; size?: number }) => (
  <IconSvg width={size} height={size} viewBox="0 0 26 26" fill="none" aria-hidden="true">
    {icons[name]}
  </IconSvg>
);

const Chevron = ({ turn = 0, bold = false }: { turn?: number; bold?: boolean }) => (
  <svg width="12" height="12" viewBox="0 0 12 12" fill="none" aria-hidden="true">
    <path
      d={bold ? "M2 4l4 4 4-4" : "M1 3.500l5 5 5-5"}
      stroke={bold ? "#555" : "#333"}
      strokeWidth={bold ? 2.4 : 1.1}
      transform={`rotate(${turn} 6 6)`}
    />
  </svg>
);

/* ---------- small building blocks ---------- */

type ToolSpec = IconName | "|" | { icon: IconName; on?: boolean; off?: boolean };

const Tools = ({ items, vertical }: { items: ToolSpec[]; vertical?: boolean }) => (
  <>
    {items.map((item, i) => {
      if (item === "|") return vertical ? <HSep key={i} /> : <VSep key={i} />;
      const spec = typeof item === "string" ? { icon: item } : item;
      return (
        <ToolBtn key={i} type="button" aria-label={spec.icon} $on={"on" in spec && spec.on} $off={"off" in spec && spec.off}>
          <Glyph name={spec.icon} />
        </ToolBtn>
      );
    })}
  </>
);

const Dropdown = ({ label, value, grow = 1, chip: hasChip }: { label: string; value: string; grow?: number; chip?: boolean }) => (
  <SelectWrap $grow={grow} $white={hasChip}>
    {hasChip && <SelectChip />}
    <select aria-label={label} defaultValue={value}>
      <option>{value}</option>
    </select>
    <Chevron />
  </SelectWrap>
);

const WindowButtons = ({ color }: { color: string }) => (
  <CaptionGroup>
    {[
      ["Minimize", "M0 6.500h12"],
      ["Maximize", "M.5.5h11v11H.5z"],
      ["Close", "M.5.5l11 11M11.500.5l-11 11"],
    ].map(([name, d]) => (
      <Caption key={name} type="button" aria-label={name}>
        <svg width="12" height="12" viewBox="0 0 12 12" fill="none">
          <path d={d} stroke={color} />
        </svg>
      </Caption>
    ))}
  </CaptionGroup>
);

const Scroll = ({ dir, before, thumb, after }: { dir: "v" | "h"; before: number; thumb: number; after: number }) => (
  <ScrollBar $dir={dir} $tracks={`20px ${before}fr ${thumb}px ${after}fr 20px`}>
    <ScrollArrow type="button" aria-label={dir === "v" ? "Up" : "Left"}>
      <Chevron bold turn={dir === "v" ? 180 : 90} />
    </ScrollArrow>
    <span />
    <Thumb />
    <span />
    <ScrollArrow type="button" aria-label={dir === "v" ? "Down" : "Right"}>
      <Chevron bold turn={dir === "v" ? 0 : 270} />
    </ScrollArrow>
  </ScrollBar>
);

const GripSvg = styled.svg`
  align-self: end;
`;

const Grip = () => (
  <GripSvg width="14" height="14" viewBox="0 0 14 14" aria-hidden="true">
    <path d="M10 1h3v3h-3zM6 5h3v3H6zM10 5h3v3h-3zM2 9h3v3H2zM6 9h3v3H6zM10 9h3v3h-3z" fill="#b8b8b8" />
  </GripSvg>
);

/* ---------- board drawing ---------- */

const gridPath = (x0: number, y0: number, stepX: number, stepY: number, cols: number, rows: number, w: number, h: number) => {
  let d = "";
  for (let r = 0; r < rows; r += 1) {
    for (let c = 0; c < cols; c += 1) {
      d += `M${Math.round(x0 + c * stepX)} ${Math.round(y0 + r * stepY)}h${w}v${h}h-${w}z`;
    }
  }
  return d;
};

const boardDots = gridPath(3, 6, 32.93, 32.93, 60, 40, 1, 1);

const BoardText = styled.text<{ $size: number; $bold?: boolean }>`
  font-family: "DejaVu Sans Mono", monospace;
  font-size: ${(p) => p.$size}px;
  text-anchor: middle;
  stroke: currentColor;
  stroke-width: ${(p) => (p.$bold ? 1 : 0)};
  stroke-linejoin: round;
  fill: currentColor;
`;

const Pads = ({ left, right }: { left: [string, number]; right: [string, number] }) => (
  <>
    <rect x="7" y="7" width="52" height="44" fill={BOARD_RED} />
    <rect x="111" y="7" width="52" height="44" fill={BOARD_RED} />
    <rect x="1.500" y="1.500" width="63" height="55" rx="5" fill="none" stroke="#7a0c20" />
    <rect x="105.500" y="1.500" width="63" height="55" rx="5" fill="none" stroke="#7a0c20" />
    <rect x=".5" y=".5" width="169" height="57" fill="none" stroke="#d8c4c4" />
    <g color="#fff">
      <BoardText $size={20} x="33" y="24">
        1
      </BoardText>
      <BoardText $size={left[1]} x="33" y={left[1] > 10 ? 46 : 42}>
        {left[0]}
      </BoardText>
      <BoardText $size={20} x="137" y="24">
        2
      </BoardText>
      <BoardText $size={right[1]} x="137" y={right[1] > 10 ? 46 : 42}>
        {right[0]}
      </BoardText>
    </g>
  </>
);

const LedFootprint = ({ name, x, y }: { name: string; x: number; y: number }) => (
  <g transform={`translate(${x} ${y})`}>
    <path d="M129 4H5.500v50H129" fill="none" stroke={SILK} strokeWidth="3" />
    <path d="M43 7h68M58 50h53" stroke={FAB} strokeWidth="3" />
    <path d="M73.500 17v23M90 18v20L77 28z" fill="none" stroke={FAB} strokeWidth="2.500" />
    <path d="M80 28.500h10M85 24v9" stroke="#14146c" />
    <Pads left={["GND", 21]} right={["Net-(D1-Pad2)", 6]} />
    <BoardText $size={39} $bold x="85" y="-6" color={SILK}>
      {name}
    </BoardText>
    <BoardText $size={39} $bold x="85" y="92" color={FAB}>
      LED
    </BoardText>
  </g>
);

const BoardCanvas = () => (
  <Drawing $bg="#000">
    <path d={boardDots} fill="#8a8a8a" />
    <g transform="translate(182 76)">
      <LedFootprint name="D2" x={0} y={0} />
      <LedFootprint name="D1" x={0} y={164} />
    </g>
    <g transform="translate(380 537)">
      <path d="M58 .5h55M58 56.500h55" stroke={SILK} strokeWidth="3" />
      <path d="M58 7h53M58 49h53" stroke={FAB} strokeWidth="3" />
      <path d="M42 5.500h86" stroke={FAB} />
      <BoardText $size={28} x="85" y="37" color={FAB}>
        R1
      </BoardText>
      <path d="M80 28.500h10M85 25v7" stroke="#1c1c8c" />
      <Pads left={["Net-(D1-Pad2)", 6]} right={["+5V", 21]} />
      <path d="M59 .5h53M59 57.500h53" stroke={SILK} strokeWidth="2" />
      <BoardText $size={39} $bold x="85" y="-7" color={SILK}>
        R1
      </BoardText>
      <BoardText $size={39} $bold x="85" y="91" color={FAB}>
        R
      </BoardText>
    </g>
    <path d="M215 127v121M319 127v121M319 298v24l94 93v130" fill="none" stroke={BOARD_RED} strokeWidth="6" strokeLinejoin="round" />
    <path d="M629.500 723v90M589 763.500h90" stroke="#fff" />
  </Drawing>
);

/* ---------- schematic drawing ---------- */

const fineDots = gridPath(11, 11, 12.37, 12.37, 110, 90, 1, 1);
const wideColumns = gridPath(60, 11, 123.7, 12.37, 12, 90, 2, 1);
const tallRows = gridPath(11, 11, 12.37, 123.7, 110, 9, 1, 2);

const SchText = styled.text<{ $anchor?: "start" | "middle" }>`
  font-family: "DejaVu Sans", sans-serif;
  font-size: 17px;
  font-weight: 200;
  fill: ${SILK};
  stroke: ${SILK};
  stroke-width: 0.4;
  text-anchor: ${(p) => p.$anchor ?? "middle"};
`;

const LedSymbol = ({ name, y }: { name: string; y: number }) => (
  <g transform={`translate(395 ${y})`}>
    <path d="M0 .5h73" stroke={BOARD_RED} />
    <path d="M23.500-13v27M49-12.500v26L24.500.5z" fill="none" stroke={BOARD_RED} strokeWidth="2" />
    <path d="M7 8L-8 22M-8 14v8h8M20 8L4.500 22M4.500 14v8h8" fill="none" stroke={BOARD_RED} />
    <SchText x="35" y="-46">
      {name}
    </SchText>
    <SchText x="35" y="-24">
      LED
    </SchText>
  </g>
);

const SchematicCanvas = () => (
  <Drawing $bg="#fff">
    <g fill="#7c7c7c">
      <path d={fineDots} />
      <path d={wideColumns} />
      <path d={tallRows} />
    </g>
    <path d="M0 4.500h1200M389.500 0v4M148 .5h9M636 .5h7" stroke="#6a0008" />
    <g fill="none" stroke={WIRE}>
      <path d="M395 419.500H258.500V678M468 419.500h74.500v173" />
      <path d="M258 567.500h137M468.500 558v34.500H653.500M653.500 667v61.500H814.500" />
      <rect x="465.500" y="552.500" width="6" height="6" />
    </g>
    <LedSymbol name="D2" y={419} />
    <LedSymbol name="D1" y={567} />
    <g fill={WIRE}>
      <circle cx="258.500" cy="568" r="5" />
      <circle cx="468.500" cy="568" r="5" />
      <circle cx="542.500" cy="592" r="5" />
    </g>
    <g fill="none" stroke={BOARD_RED}>
      <path d="M653.500 592v13M653.500 654v13M258.500 678v13M246.500 691.500h24l-12 12z" />
      <path d="M814.500 728v-24M807.500 717l7-13 7 13" />
      <rect x="644" y="605" width="20" height="49" fill="#fff" strokeWidth="2" />
    </g>
    <SchText x="259" y="728">
      Power_GND
    </SchText>
    <SchText x="672" y="625" $anchor="start">
      R1
    </SchText>
    <SchText x="672" y="647" $anchor="start">
      R
    </SchText>
    <SchText x="768" y="692" $anchor="start">
      Power_+5V
    </SchText>
    <path d="M505.500 157v80M466 196.500h80" stroke="#222" />
  </Drawing>
);

/* ---------- data ---------- */

const layerRows: [string, string][] = [
  ["F.Cu", "#840000"],
  ["B.Cu", "#008400"],
  ["F.Adhes", "#840084"],
  ["B.Adhes", "#000084"],
  ["F.Paste", "#840000"],
  ["B.Paste", "#00c2c2"],
  ["F.SilkS", "#008484"],
  ["B.SilkS", "#840084"],
  ["F.Mask", "#840084"],
  ["B.Mask", "#848400"],
  ["Dwgs.User", "#c2c2c2"],
  ["Cmts.User", "#000084"],
  ["Eco1.User", "#008400"],
  ["Eco2.User", "#c2c200"],
  ["Edge.Cuts", "#c2c200"],
  ["Margin", "#c200c2"],
  ["F.CrtYd", "#c2c2c2"],
  ["B.CrtYd", "#848484"],
  ["F.Fab", "#848484"],
  ["B.Fab", "#000084"],
];

const pcbTop: ToolSpec[] = [
  "save", "|", "boardSetup", "|", "page", "print", "plot", "|", "undo", "redo", "|", "find", "|",
  "refresh", "zoomIn", "zoomOut", "zoomFit", "zoomArea", "|", "footprint", "library", "|", "net", "update", "bug", "|",
];

const pcbLeft: ToolSpec[] = [
  "drcOff", { icon: "grid", on: true }, "polar", "inch", { icon: "mm", on: true }, "cursorShape", "|",
  { icon: "ratsnest", on: true }, "|", { icon: "zoneFill", on: true }, "zoneOff", "zoneOutline", "|",
  "padSketch", "viaSketch", "trackSketch", "contrast", "|", { icon: "layers", on: true }, "meander", "|",
];

const pcbRight: ToolSpec[] = [
  "pointer", "|", "highlightNet", "localRats", "|", "footprint", { icon: "route", on: true }, "via", "zone", "keepout", "|",
  "polyline", "circle", "arc", "polygon", "text", "|", "dimension", "target", "|", "trash", "|", "origin", "gridOrigin", "measure",
];

const schTop: ToolSpec[] = [
  "save", "|", "page", "|", "print", "plot", "|", { icon: "paste", off: true }, "|", "undo", "redo", "|", "find", "replace", "|",
  "refresh", "zoomIn", "zoomOut", "zoomFit", "zoomArea", "|", "hierNav", { icon: "hierUp", off: true }, "|",
  "opamp", "library", "footprint", "|", "annotate", "bug", "assign", "net", "table", "bom", "|",
];

const schLeft: ToolSpec[] = [
  { icon: "grid", on: true }, "inch", { icon: "mm", on: true }, "cursorShape", "hiddenPins", { icon: "orth", on: true },
];

const schRight: ToolSpec[] = [
  { icon: "pointer", on: true }, "netSch", "opamp", "ground", "wire", "bus", "wireEntry", "busEntry", "noConnect", "junction",
  "label", "globalLabel", "hierLabel", "sheet", "importLabel", "sheetPin", "dashedBox", "text", "camera", "trash",
];

/* ---------- windows ---------- */

const Pcbnew = () => (
  <Window>
    <TitleBar>
      <Glyph name="board" size={20} />
      <Title>Pcbnew — C:\Users\Gebruiker\Desktop\test\test.kicad_pcb</Title>
      <WindowButtons color="#000" />
    </TitleBar>
    <MenuBar>
      {["Bestand", "Bewerken", "Weergave", "Plaats", "Route", "Inspect", "Tools", "Preferences", "Hulp"].map((m) => (
        <MenuItem key={m} type="button">
          {m}
        </MenuItem>
      ))}
    </MenuBar>
    <ToolRow $height={40}>
      <Tools items={pcbTop} />
      <Dropdown label="Active layer" value="F.Cu (PgUp)" chip />
      <Tools items={["layerPair", "|", "schematic", "|", "python"]} />
    </ToolRow>
    <SelectRow $height={32}>
      <Dropdown label="Track width" value="Track: 0,250 mm (9,84 mils) *" grow={221} />
      <Dropdown label="Via size" value="Via: 0,80 / 0,40 mm (31,5 / 15,7 mils) *" grow={281} />
      <Tools items={["|", "trackWidth", "|"]} />
      <Dropdown label="Grid" value="Grid: 1,2700 mm (50,00 mils)" grow={252} />
      <Tools items={["|"]} />
      <Dropdown label="Zoom" value="Zoom Auto" grow={127} />
    </SelectRow>
    <Workspace $gap={3}>
      <SideBar $side="left">
        <Tools items={pcbLeft} vertical />
      </SideBar>
      <CanvasArea>
        <BoardCanvas />
        <Scroll dir="v" before={346} thumb={21} after={394} />
        <Scroll dir="h" before={306} thumb={21} after={297} />
      </CanvasArea>
      <SideBar $side="inner">
        <Tools items={pcbRight} vertical />
      </SideBar>
      <Layers>
        <LayersCaption>Layers Manager</LayersCaption>
        <LayersBody>
          <TabStrip role="tablist">
            <Tab type="button" role="tab" aria-selected="true" $on>
              Lagen
            </Tab>
            <Tab type="button" role="tab" aria-selected="false">
              Items
            </Tab>
          </TabStrip>
          <LayerList>
            {layerRows.map(([name, color], i) => (
              <LayerRow key={name}>
                <ActiveMark $on={i === 0} />
                <Swatch type="button" aria-label={`${name} color`} $color={color} />
                <LayerLabel>
                  <Check type="checkbox" defaultChecked />
                  {name}
                </LayerLabel>
              </LayerRow>
            ))}
          </LayerList>
        </LayersBody>
      </Layers>
    </Workspace>
    <Message>Wrote board file: "C:\Users\Gebruiker\Desktop\test\_autosave-test.kicad_pcb"</Message>
    <Status $columns="10px 80px 219fr 338fr 250fr 61px">
      <Cell>#</Cell>
      <Cell>Z 7,24</Cell>
      <Cell>{"X 27,940000  Y -54,610000"}</Cell>
      <Cell>{"dx 27,940000  dy -54,610000  dist 61,342"}</Cell>
      <Cell>{"grid X 1,270000  Y 1,270000"}</Cell>
      <Cell>
        mm
        <Grip />
      </Cell>
    </Status>
  </Window>
);

const Eeschema = () => (
  <Window $inactive>
    <TitleBar $inactive>
      <Glyph name="schematic" size={20} />
      <Title>Eeschema — test.sch [/] — C:\Users\Gebruiker\Desktop\test</Title>
      <WindowButtons color="#888" />
    </TitleBar>
    <MenuBar $inactive>
      {["Bestand", "Bewerken", "Weergave", "Plaats", "Inspect", "Tools", "Preferences", "Hulp"].map((m) => (
        <MenuItem key={m} type="button">
          {m}
        </MenuItem>
      ))}
    </MenuBar>
    <ToolRow $height={39}>
      <Tools items={schTop} />
    </ToolRow>
    <Workspace>
      <SideBar $side="left">
        <Tools items={schLeft} vertical />
      </SideBar>
      <CanvasArea>
        <SchematicCanvas />
        <Scroll dir="v" before={279} thumb={62} after={456} />
        <Scroll dir="h" before={341} thumb={50} after={430} />
      </CanvasArea>
      <SideBar $side="right">
        <Tools items={schRight} vertical />
      </SideBar>
    </Workspace>
    <Message />
    <Status $columns="10px 80px 220fr 338fr 251fr 60px">
      <Cell>F</Cell>
      <Cell>Z 2,72</Cell>
      <Cell>{"X 110,50  Y 73,66"}</Cell>
      <Cell>{"dx 110,50  dy 73,66  dist 132,80"}</Cell>
      <Cell>grid 1,2700</Cell>
      <Cell>
        mm
        <Grip />
      </Cell>
    </Status>
  </Window>
);

export default function App() {
  return (
    <>
      <GlobalStyle />
      <Desktop>
        <Pcbnew />
        <Eeschema />
      </Desktop>
    </>
  );
}
